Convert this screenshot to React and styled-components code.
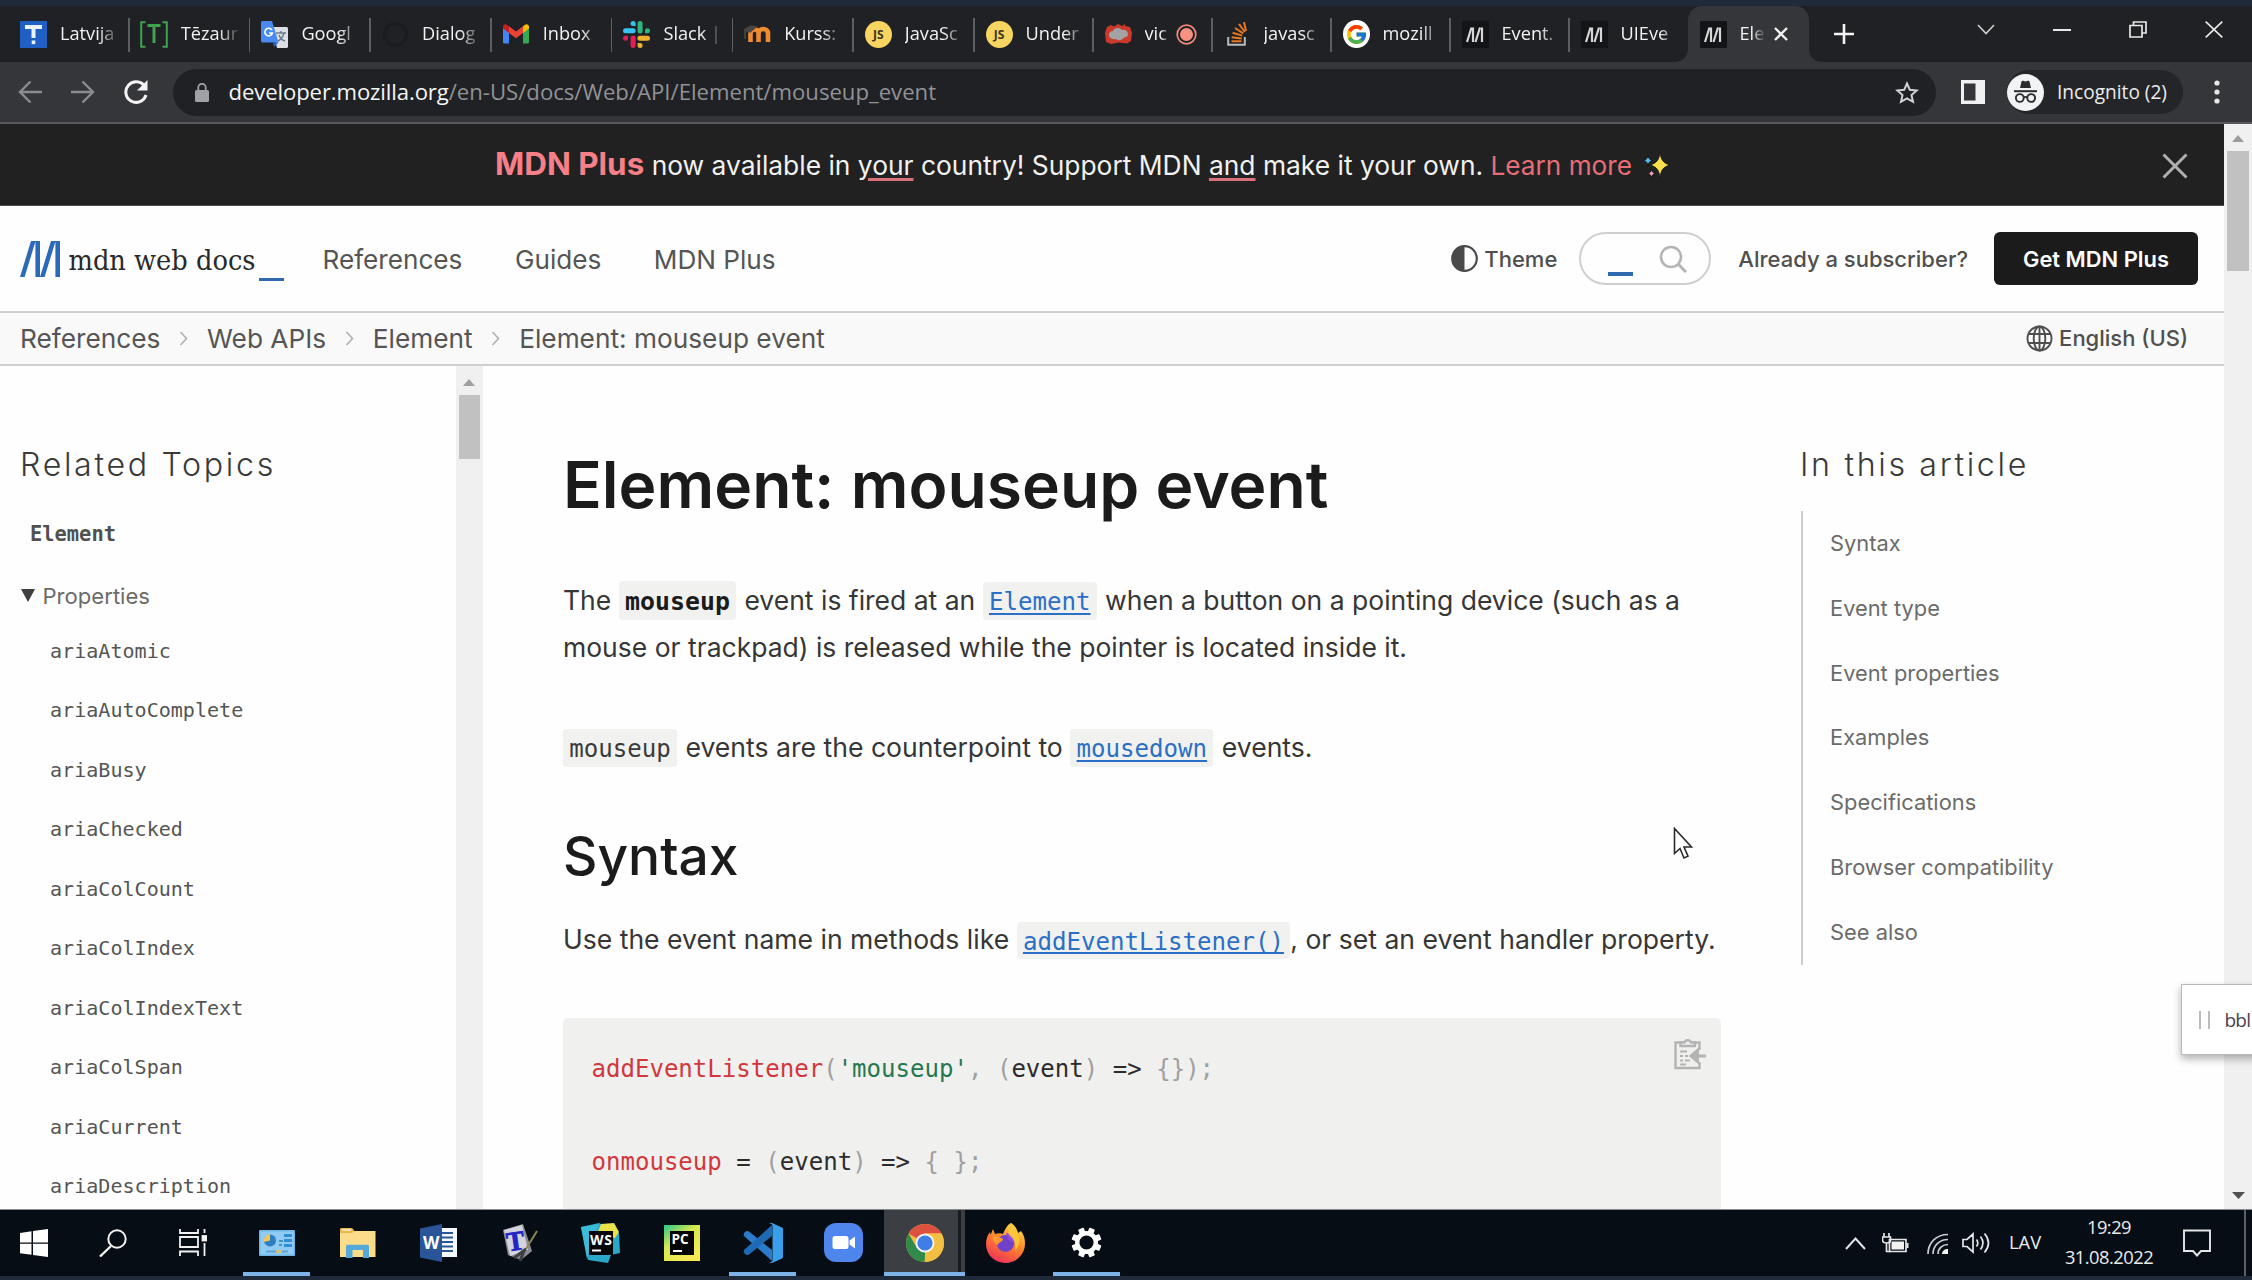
import React from "react";
import styled, { createGlobalStyle, css } from "styled-components";
import { FcGoogle } from "react-icons/fc";

const ui = `"Open Sans", "Noto Sans", sans-serif`;
const inter = `Inter, "Liberation Sans", sans-serif`;
const mono = `"DejaVu Sans Mono", "Liberation Mono", monospace`;

const Global = createGlobalStyle`
  html, body { margin: 0; padding: 0; background: #1f2b3b; }
  * { box-sizing: border-box; }
  svg { display: block; flex: none; }
`;

const Screen = styled.div`
  position: relative;
  width: 2252px;
  height: 1280px;
  overflow: hidden;
  display: flex;
  flex-direction: column;
  padding: 6px 0 4px;
  background: #1f2b3b;
  font-family: ${inter};
`;

/* ---------- tab strip ---------- */
const TabStrip = styled.div`
  height: 56px;
  flex: none;
  display: flex;
  padding-left: 8px;
  background: #202124;
  font-family: ${ui};
`;

const TabBox = styled.div`
  position: relative;
  width: ${(p) => p.$w}px;
  flex: none;
  display: flex;
  align-items: center;
  padding-left: 12px;
  gap: 13px;
  ${(p) =>
    p.$active
      ? css`
          background: #35363a;
          border-radius: 14px 14px 0 0;
          &::before,
          &::after {
            content: "";
            position: absolute;
            bottom: 0;
            width: 12px;
            height: 12px;
          }
          &::before {
            left: -12px;
            background: radial-gradient(circle at 0 0, transparent 11.5px, #35363a 12px);
          }
          &::after {
            right: -12px;
            background: radial-gradient(circle at 100% 0, transparent 11.5px, #35363a 12px);
          }
        `
      : css`
          &::after {
            content: "";
            position: absolute;
            right: -1px;
            top: 12px;
            width: ${p.$noSep ? 0 : 1.6}px;
            height: 34px;
            background: #5d5e62;
          }
        `}
`;

const Favicon = styled.div`
  width: 27px;
  height: 27px;
  flex: none;
  display: flex;
  align-items: center;
  justify-content: center;
`;

const TabTitle = styled.div`
  width: ${(p) => p.$w || 62}px;
  overflow: hidden;
  white-space: nowrap;
  font-size: 18.2px;
  line-height: 28px;
  color: #f1f2f2;
  margin-top: -2px;
  mask-image: linear-gradient(to right, #000 ${(p) => p.$solid ?? 62}%, rgba(0, 0, 0, 0.15) 92%);
`;

const WindowButtons = styled.div`
  flex: 1;
  display: flex;
  align-items: center;
  color: #e8e8e8;
`;

const Slot = styled.div`
  display: flex;
  margin-left: ${(p) => p.$ml || 0}px;
  margin-top: ${(p) => p.$mt || 0}px;
`;

const YellowDisc = styled.div`
  width: 27px;
  height: 27px;
  border-radius: 50%;
  background: #f7d560;
  color: #3b3420;
  font: 700 12px/27px ${ui};
  text-align: center;
`;

const WhiteDisc = styled.div`
  width: 28px;
  height: 28px;
  border-radius: 50%;
  background: #fff;
  display: flex;
  align-items: center;
  justify-content: center;
`;

const MIcon = () => (
  <svg width="27" height="27" viewBox="0 0 27 27">
    <rect width="27" height="27" fill="#131417" />
    <path d="M5 21 9.5 6.500M11 6.500V21M13.500 21 18 6.500M20 6.500V21" stroke="#d6d6d6" strokeWidth="2.200" fill="none" />
  </svg>
);

const favicons = {
  latvija: (
    <svg width="27" height="27" viewBox="0 0 27 27">
      <rect width="27" height="27" fill="#2060c4" />
      <path d="M5 4h17v4h-6.500v9h-4V8H5z" fill="#eaf3ff" />
      <rect x="11.700" y="19.500" width="3.600" height="3.600" fill="#eaf3ff" />
    </svg>
  ),
  tezaurs: (
    <svg width="28" height="27" viewBox="0 0 28 27" fill="none" stroke="#3fa34d">
      <path d="M5.500 1.200H1.200v24.600h4.300M22.500 1.200h4.300v24.600h-4.300" strokeWidth="2" />
      <path d="M7.500 4.500h13M14 4.500V22" strokeWidth="3" />
    </svg>
  ),
  translate: (
    <svg width="27" height="27" viewBox="0 0 27 27">
      <path d="M11 6h14.500c.8 0 1.500.7 1.500 1.500v18c0 .8-.7 1.500-1.500 1.500H16z" fill="#dcdfe3" />
      <path d="M15 12h10M20 10v2M23 12c-1 4-4 7-6 8M18 14c1 3 3 5 6 6" stroke="#6d7c8c" strokeWidth="1.400" fill="none" />
      <path d="M1.500 0H11l6.500 21.500H1.500C.7 21.500 0 20.800 0 20V1.500C0 .7.7 0 1.500 0z" fill="#4a89f0" />
      <path d="m13 26 4.500-4.500H12z" fill="#2f62c9" />
      <path d="M11 9.200A3.800 3.800 0 1 0 11.400 12H8" stroke="#fff" strokeWidth="1.600" fill="none" />
    </svg>
  ),
  dialog: (
    <svg width="27" height="27" viewBox="0 0 27 27">
      <circle cx="13.500" cy="13.500" r="11" fill="none" stroke="#1b1c1f" strokeWidth="3" />
    </svg>
  ),
  gmail: (
    <svg width="26" height="20" viewBox="0 0 26 20">
      <path d="M0 3v15c0 1 .6 1.500 1.500 1.500H6V8z" fill="#4285f4" />
      <path d="M26 3v15c0 1-.6 1.500-1.500 1.500H20V8z" fill="#34a853" />
      <path d="M20 2.500V9l6-4.500V2.800C26 .4 23.500-.6 21.800.8z" fill="#fbbc04" />
      <path d="M6 9V2.300l7 5.300 7-5.300V9l-7 5.200z" fill="#ea4335" />
      <path d="M0 2.800v1.700L6 9V2.500L4.200.8C2.500-.6 0 .4 0 2.800z" fill="#c5221f" />
    </svg>
  ),
  slack: (
    <svg width="27" height="27" viewBox="0 0 27 27">
      <g fill="#36c5f0"><rect x="0" y="7.200" width="12.600" height="5" rx="2.500" /><path d="M7.600 2.500a2.500 2.500 0 0 1 5 0V5h-2.500a2.500 2.500 0 0 1-2.500-2.500z" /></g>
      <g fill="#2eb67d"><rect x="14.600" y="0" width="5" height="12.600" rx="2.500" /><path d="M24.500 7.200a2.500 2.500 0 0 1 0 5H22V9.700a2.500 2.500 0 0 1 2.500-2.500z" /></g>
      <g fill="#ecb22e"><rect x="14.400" y="14.800" width="12.600" height="5" rx="2.500" /><path d="M14.600 22h2.500a2.500 2.500 0 1 1-2.500 2.500z" /></g>
      <g fill="#e01e5a"><rect x="7.600" y="14.400" width="5" height="12.600" rx="2.500" /><path d="M5 14.800v2.500a2.500 2.500 0 1 1-2.500-2.500z" /></g>
    </svg>
  ),
  moodle: (
    <svg width="27" height="18" viewBox="0 0 27 18" fill="none">
      <path d="M6.500 17V8.500c0-5.500 8-5.500 8 0V17M14.500 8.500c0-6 9.500-6 9.500 0V17" stroke="#ee8a30" strokeWidth="4.600" />
      <path d="M0 5 7 1l5 1-6 5zM1 5v9" stroke="#4a4542" strokeWidth="1.500" fill="#4a4542" />
    </svg>
  ),
  js: <YellowDisc>JS</YellowDisc>,
  vic: (
    <svg width="27" height="20" viewBox="0 0 27 20">
      <path d="M2 3 6 1l3 1.500L13 0l4 2 3-2v2l5 1 2 6-1 8-4 2.500-8-1-8 1.500-5-2L0 9z" fill="#c93a2c" />
      <path d="M4 11c0-3 2-4 4-4 1-3 6-4.500 9-1 3-1 6 1 6 4.500 0 2-2 3-4 3-2 3-6 3.500-8 1.500-3 1-7-1-7-4z" fill="#a3a3a3" />
    </svg>
  ),
  stack: (
    <svg width="20" height="24" viewBox="0 0 20 24" fill="none">
      <path d="M1.200 15v7.800h16.600V15" stroke="#b9babb" strokeWidth="2" />
      <path d="M4.500 19.300h10M4.700 15.200l10 1.200M5.600 10.800l9.600 2.800M8 6l8.200 5.400M12 2l5.800 8M17 0l2 9" stroke="#e87922" strokeWidth="2" />
    </svg>
  ),
  google: (
    <WhiteDisc>
      <FcGoogle size={23} />
    </WhiteDisc>
  ),
  mdn: <MIcon />,
};

const tabs = [
  ["latvija", "Latvija", 120.7],
  ["tezaurs", "Tēzaur", 120.7],
  ["translate", "Googl", 120.7],
  ["dialog", "Dialog", 120.7],
  ["gmail", "Inbox", 120.7],
  ["slack", "Slack |", 120.7],
  ["moodle", "Kurss:", 120.7],
  ["js", "JavaSc", 120.7],
  ["js", "Under", 119],
  ["vic", "vic", 119],
  ["stack", "javasc", 119],
  ["google", "mozill", 119],
  ["mdn", "Event.", 119],
  ["mdn", "UIEve", 119],
];

const Recording = () => (
  <svg width="21" height="21" viewBox="0 0 21 21">
    <circle cx="10.500" cy="10.500" r="9.300" fill="none" stroke="#f08a7a" strokeWidth="1.700" />
    <circle cx="10.500" cy="10.500" r="6.500" fill="#f79182" />
  </svg>
);

/* ---------- toolbar ---------- */
const Toolbar = styled.div`
  height: 62px;
  flex: none;
  display: flex;
  align-items: center;
  background: #35363a;
  border-bottom: 2px solid #57595c;
  padding-left: 18px;
  font-family: ${ui};
`;

const AddressBar = styled.div`
  width: 1763px;
  height: 47px;
  margin-left: 25px;
  border-radius: 24px;
  background: #202124;
  display: flex;
  align-items: center;
  padding: 0 17px 0 22px;
  font-size: 22.150px;
  color: #909296;
`;

const Url = styled.div`
  flex: 1;
  margin: -2px 0 0 19.500px;
  white-space: nowrap;
  b {
    font-weight: 400;
    color: #f4f5f5;
    letter-spacing: -0.12px;
  }
`;

const IncognitoChip = styled.div`
  display: flex;
  align-items: center;
  width: 176px;
  height: 44px;
  margin-left: 22px;
  border-radius: 22px;
  background: #242528;
  gap: 13px;
  font-size: 19.100px;
  color: #eceded;
  white-space: nowrap;
`;

/* ---------- page ---------- */
const Viewport = styled.div`
  height: 1085px;
  flex: none;
  display: flex;
  background: #fefefe;
  overflow: hidden;
`;

const Page = styled.div`
  width: 2224px;
  flex: none;
  display: flex;
  flex-direction: column;
`;

const Scrollbar = styled.div`
  width: ${(p) => p.$w}px;
  flex: none;
  display: flex;
  flex-direction: column;
  align-items: center;
  background: #f0f0f0;
`;

const Thumb = styled.div`
  width: 21.500px;
  height: ${(p) => p.$h}px;
  background: #c1c1c1;
`;

const ArrowCell = styled.div`
  height: ${(p) => p.$h}px;
  padding-top: ${(p) => p.$pt}px;
`;

const Banner = styled.div`
  height: 82px;
  flex: none;
  display: flex;
  align-items: center;
  justify-content: space-between;
  padding: 0 36px 0 495px;
  background: #212121;
  color: #f1f1f1;
  font-size: 26.380px;
  line-height: 40px;
  border-bottom: 1px solid #4a4a4a;
`;

const BannerText = styled.div`
  display: flex;
  align-items: center;
  white-space: pre;
`;

const Accent = styled.span`
  color: ${(p) => (p.$strong ? "#f77f88" : "#e76e77")};
  font-weight: ${(p) => (p.$strong ? 700 : 400)};
  font-size: ${(p) => (p.$strong ? 31.4 : 26.2)}px;
`;

const Underlined = styled.span`
  text-decoration: underline;
  text-decoration-color: #d8707c;
  text-decoration-thickness: 3px;
  text-underline-offset: 3px;
`;

const Header = styled.div`
  height: 107px;
  flex: none;
  display: flex;
  align-items: center;
  padding: 0 26px 0 20px;
  background: #fefefe;
  border-bottom: 2px solid #cdcdcd;
`;

const LogoText = styled.div`
  margin: 2px 0 0 8.500px;
  font-family: "DejaVu Serif Condensed", "DejaVu Serif", serif;
  font-stretch: semi-condensed;
  font-size: 28.600px;
  color: #2a2a2a;
  white-space: nowrap;
`;

const Caret = styled.div`
  width: 25.500px;
  height: 3.500px;
  background: #3068ad;
  margin: ${(p) => p.$m};
`;

const Nav = styled.nav`
  display: flex;
  gap: 52.500px;
  margin: 2px 0 0 38.500px;
  font-size: 26.150px;
  color: #555;
  flex: 1;
`;

const HeaderItem = styled.div`
  display: flex;
  align-items: center;
  gap: 6px;
  margin-left: ${(p) => p.$ml || 0}px;
  font-size: 22px;
  font-weight: 500;
  color: #4f4f4f;
  white-space: nowrap;
`;

const SearchPill = styled.div`
  display: flex;
  width: 132px;
  height: 53px;
  margin-left: 22px;
  border: 2px solid #cfcfcf;
  border-radius: 27px;
  padding-left: 26.500px;
`;

const PlusButton = styled.div`
  width: 204px;
  height: 53px;
  margin-left: 26px;
  border-radius: 6px;
  background: #1b1b1b;
  color: #fff;
  font-size: 21.900px;
  font-weight: 600;
  line-height: 54px;
  text-align: center;
`;

const Crumbs = styled.div`
  height: 53px;
  flex: none;
  display: flex;
  align-items: center;
  padding: 0 36px 1px 20px;
  background: #f9f9f9;
  border-bottom: 2px solid #cfcfcf;
  color: #555;
  font-size: 26.250px;
  white-space: nowrap;
  svg.sep {
    margin: 0 18.800px 0;
  }
`;

const Spacer = styled.div`
  flex: 1;
`;

const Columns = styled.div`
  flex: 1;
  min-height: 0;
  display: flex;
`;

const Sidebar = styled.aside`
  width: 455.500px;
  flex: none;
  padding-top: 69px;
`;

const SideTitle = styled.div`
  height: 60px;
  line-height: 60px;
  font-size: 32.200px;
  font-weight: 350;
  letter-spacing: 2.650px;
  color: #3a3a3a;
  white-space: nowrap;
  padding-left: ${(p) => p.$pl || 0}px;
`;

const SideHeading = styled.div`
  height: 40px;
  line-height: 40px;
  margin: 18.500px 0 22px;
  padding-left: 30px;
  font: 700 20.400px/40px ${mono};
  color: #505050;
`;

const SideGroup = styled.div`
  display: flex;
  align-items: center;
  height: 40px;
  margin-bottom: 6px;
  padding-left: 21px;
  gap: 7.500px;
  font-size: 22.100px;
  color: #6b6b6b;
`;

const SideLink = styled.div`
  height: 59.500px;
  padding-left: 50px;
  font: 400 20.070px/59.500px ${mono};
  color: #555;
`;

const Article = styled.main`
  width: 1238px;
  flex: none;
  padding: 79.500px 0 0 80px;
  color: #363636;
`;

const H1 = styled.h1`
  margin: 0 0 53px;
  font-size: 64.150px;
  font-weight: 600;
  line-height: 78px;
  color: #1b1b1b;
  white-space: nowrap;
`;

const H2 = styled.h2`
  margin: 52.500px 0 28.500px;
  font-size: 53.300px;
  font-weight: 500;
  line-height: 64px;
  color: #1b1b1b;
`;

const P = styled.p`
  margin: 0 0 ${(p) => p.$mb || 0}px;
  font-size: ${(p) => p.$fs || 26.5}px;
  line-height: 47.400px;
  white-space: nowrap;
`;

const Code = styled.code`
  padding: 5.500px 6.300px 4px;
  margin-right: ${(p) => (p.$tight ? 0 : 0.8)}px;
  border-radius: 4px;
  background: #f1f1f0;
  font-family: ${mono};
  font-size: ${(p) => (p.$bold ? 24.9 : 24.1)}px;
  font-weight: ${(p) => (p.$bold ? 700 : 400)};
  line-height: 30px;
  color: ${(p) => (p.$bold ? "#1b1b1b" : "#3a3a3a")};
`;

const CodeLink = styled.a`
  color: #2b6fc6;
  text-decoration: underline;
  text-decoration-thickness: 2px;
  text-underline-offset: 3px;
`;

const CodeBlock = styled.pre`
  position: relative;
  height: 220px;
  margin: 54px 0 0;
  padding: 28.500px 28.500px;
  border-radius: 5px;
  background: #f0f0ef;
  font: 400 24.060px/46.300px ${mono};
  color: #a0a0a0;
`;

const Tok = styled.span`
  color: ${(p) => ({ fn: "#d2373c", str: "#24784f", id: "#2c2c2c" }[p.$k])};
`;

const CopyIcon = styled.div`
  position: absolute;
  top: 18px;
  right: 15px;
`;

const Toc = styled.aside`
  margin-left: 79px;
  padding-top: 69px;
`;

const TocList = styled.div`
  margin: 16px 0 0 1px;
  border-left: 2px solid #cdcdcd;
  padding-left: 27px;
`;

const TocItem = styled.div`
  height: 64.800px;
  line-height: 64px;
  font-size: 21.850px;
  color: #6b6b6b;
`;

/* ---------- overlays ---------- */
const Popup = styled.div`
  position: absolute;
  left: 2181px;
  top: 984px;
  width: 90px;
  height: 71px;
  display: flex;
  align-items: center;
  padding-left: 17px;
  gap: 14.500px;
  background: #fff;
  border: 1.500px solid #b9b9b9;
  box-shadow: 0 4px 8px rgba(0, 0, 0, 0.3);
  font: 400 19px ${ui};
  letter-spacing: -0.800px;
  color: #4a3f4c;
`;

const Grip = styled.div`
  width: 11px;
  height: 18px;
  border: solid #bcbcbc;
  border-width: 0 2.500px;
`;

const Pointer = styled.div`
  position: absolute;
  left: 1673px;
  top: 827px;
`;

/* ---------- taskbar ---------- */
const Taskbar = styled.div`
  height: 67px;
  flex: none;
  display: flex;
  background: #070d14;
  border-top: 1px solid #878b8f;
  font-family: ${ui};
`;

const TaskCell = styled.div`
  position: relative;
  width: ${(p) => p.$w || 81}px;
  margin-left: ${(p) => p.$ml || 0}px;
  padding-bottom: 1px;
  display: flex;
  align-items: center;
  justify-content: center;
  background: ${(p) => (p.$active ? "linear-gradient(to right, #3b3f43 74px, #191d22 74px, #191d22 77px, #3b3f43 77px)" : "none")};
  &::after {
    content: "";
    position: absolute;
    bottom: 0;
    height: 4px;
    left: ${(p) => (p.$active ? 0 : 7)}px;
    right: ${(p) => (p.$active ? 0 : 7)}px;
    background: ${(p) => (p.$active || p.$open ? "#7db3e8" : "none")};
  }
`;

const Tray = styled.div`
  margin-left: auto;
  display: flex;
  align-items: center;
  color: #e9ebed;
  padding-right: 6px;
`;

const Lang = styled.div`
  width: 34px;
  margin: -3px 0 0 18px;
  font-size: 18.400px;
`;

const Clock = styled.div`
  width: 94px;
  margin: -3px 0 0 19px;
  font-size: 18.300px;
  line-height: 30px;
  letter-spacing: -0.5px;
  text-align: center;
`;

const ShowDesktop = styled.div`
  width: 2px;
  height: 66px;
  margin-left: 33px;
  background: #5b6066;
`;

const WinLogo = () => (
  <svg width="28" height="28" viewBox="0 0 28 28" fill="#fff">
    <path d="M0 4 11.500 2.300V13.400H0zM13 2.100 28 0v13.400H13zM0 14.800h11.500v11L0 24.200zM13 14.800h15V28l-15-2.100z" />
  </svg>
);

const SearchGlyph = () => (
  <svg width="28" height="28" viewBox="0 0 28 28" fill="none" stroke="#f2f2f2" strokeWidth="2">
    <circle cx="18" cy="10" r="8.700" />
    <path d="M12 17 1 27.500" strokeWidth="2.400" />
  </svg>
);

const TaskView = () => (
  <svg width="28" height="27" viewBox="0 0 28 27" fill="none" stroke="#f2f2f2" strokeWidth="1.800">
    <path d="M1 0v4h18V0M1 27v-4.500h18V27M1 8h18v10H1z" />
    <path d="M25.500 0v4M25.500 14v13" />
    <rect x="23.500" y="7" width="4" height="4.500" fill="#f2f2f2" />
  </svg>
);

const PanelIcon = () => (
  <svg width="36" height="26" viewBox="0 0 36 26">
    <rect width="36" height="26" rx="1" fill="#6fb6e8" />
    <rect x="1.500" y="1.500" width="33" height="23" fill="#8fcbf2" />
    <circle cx="11" cy="10.500" r="6" fill="#2f7fc0" />
    <path d="M11 10.500V4a6.500 6.500 0 0 0-6 8z" fill="#f2c65b" />
    <path d="M20 11h4M20 15h3" stroke="#2f7fbb" strokeWidth="1.600" />
    <path d="M25 4h8v3h-8zM25 9h8v3h-8zM25 14h8v3h-8z" fill="#2f8fd0" />
    <path d="M7 21.500h22" stroke="#5ba5d4" strokeWidth="2" />
    <path d="M17 20h6v3h-6z" fill="#d7c078" />
  </svg>
);

const FolderIcon = () => (
  <svg width="37" height="30" viewBox="0 0 37 30">
    <path d="M1 1.500C1 .7 1.500 0 2.500 0H13l2.500 3H36v26H1z" fill="#e9b64b" />
    <path d="M1 5h12l2.500-2H36.500v26H1z" fill="#fbdc8b" />
    <path d="M3 2h9" stroke="#fff3cc" strokeWidth="1.500" />
    <path d="M7 30V18.500c0-1 .8-1.800 1.800-1.800h19.400c1 0 1.800.8 1.800 1.800V30h-6v-8H13.500v8z" fill="#53a9d8" />
  </svg>
);

const WordIcon = () => (
  <svg width="37" height="38" viewBox="0 0 37 38">
    <rect x="19" y="4" width="18" height="29" fill="#f5f8fc" />
    <path d="M22 9h11M22 13.500h11M22 18h11M22 22.500h11M22 27h11" stroke="#2b579a" strokeWidth="2.200" />
    <path d="M0 4.500 22 0v38L0 33.500z" fill="#2a5699" />
    <text x="3" y="25" fontFamily="Open Sans, sans-serif" fontSize="17" fontWeight="700" fill="#fff">W</text>
  </svg>
);

const TIcon = () => (
  <svg width="36" height="38" viewBox="0 0 36 38">
    <path d="M1 6 21 0l9 27-11 9-13-5z" fill="#8d8d94" />
    <path d="M2 6 20 1l6 25-18 6z" fill="#d3d4e0" />
    <text x="4.500" y="26" fontFamily="Liberation Serif, serif" fontSize="27" fontWeight="700" fill="#2424c4" stroke="#2424c4" strokeWidth="0.800" transform="rotate(-8 14 18)">T</text>
    <path d="M35 7 24 25" stroke="#8c8654" strokeWidth="2" />
    <path d="M24 25 12 34M22 27l-4 10" stroke="#3e3e44" strokeWidth="3" />
  </svg>
);

const WsIcon = () => (
  <svg width="40" height="40" viewBox="0 0 40 40">
    <path d="M0 4 18 0l20 10 1 20-9 2-3 8L7 37z" fill="#2aa8c9" />
    <path d="M20 1 33 0l5 9-4 6-18-4z" fill="#e9e34c" />
    <path d="M0 4 18 1 10 20 6 36z" fill="#3dbcd8" />
    <rect x="8" y="8" width="24" height="24" fill="#050708" />
    <text x="9" y="21.500" fontFamily="Open Sans, sans-serif" fontSize="14" fontWeight="700" fill="#fff" textLength="22">WS</text>
    <path d="M11 27.500h9" stroke="#fff" strokeWidth="2" />
  </svg>
);

const PcIcon = () => (
  <svg width="36" height="36" viewBox="0 0 36 36">
    <defs>
      <linearGradient id="pc" x1="0" y1="0" x2="0.700" y2="1">
        <stop offset="0" stopColor="#27c88a" />
        <stop offset="0.450" stopColor="#d8e84f" />
        <stop offset="1" stopColor="#f7ea55" />
      </linearGradient>
    </defs>
    <rect width="36" height="36" fill="url(#pc)" />
    <rect x="6" y="6" width="24" height="24" fill="#050505" />
    <text x="7.500" y="18.500" fontFamily="Open Sans, sans-serif" fontSize="13.500" fontWeight="700" fill="#fff">PC</text>
    <path d="M9 26h9" stroke="#fff" strokeWidth="2" />
  </svg>
);

const VsCode = () => (
  <svg width="41" height="40" viewBox="0 0 41 40">
    <path d="M2.500 13.500 30 38V27L7 8.500C5.500 7.500 4 8 2.800 9.200s-1.600 3-.3 4.300z" fill="#2a7ccb" />
    <path d="M2.500 26.500 30 2v11L7 31.500c-1.500 1-3 .5-4.200-.7s-1.600-3-.3-4.300z" fill="#1f6ab4" />
    <path d="M30 0l9.500 4.300c.8.400 1.500 1 1.500 2v27.400c0 1-.7 1.600-1.500 2L30 40c-1 .3-2 0-2.500-1 1.500.5 3-.5 3-2V3c0-1.500-1.500-2.500-3-2 .5-1 1.500-1.300 2.500-1z" fill="#3a9fea" />
  </svg>
);

const ZoomIcon = () => (
  <svg width="39" height="39" viewBox="0 0 39 39">
    <rect width="39" height="39" rx="12" fill="#4f86ee" />
    <rect x="8.500" y="13" width="16" height="13" rx="2.500" fill="#fff" />
    <path d="m25.500 17.500 5.500-4v12l-5.500-4z" fill="#fff" />
  </svg>
);

const ChromeIcon = () => (
  <svg width="38" height="38" viewBox="0 0 38 38">
    <circle cx="19" cy="19" r="19" fill="#f2bf42" />
    <path d="M19 19 2.550 9.500A19 19 0 0 1 35.450 9.500H19z" fill="#dc5040" />
    <path d="M2.550 9.500 10.800 23.700 19 28.500 L18.500 38A19 19 0 0 1 2.550 9.500z" fill="#2f8a4b" />
    <path d="M10.800 23.700 19 28.500 18 38z" fill="#2f8a4b" />
    <path d="M27.300 23.700 19 38a19 19 0 0 0 16.450-28.500H19z" fill="#f2bf42" />
    <circle cx="19" cy="19" r="9.500" fill="#f4f4f4" />
    <circle cx="19" cy="19" r="7.600" fill="#3f7ee8" />
  </svg>
);

const FirefoxIcon = () => (
  <svg width="39" height="40" viewBox="0 0 39 40">
    <defs>
      <linearGradient id="ff" x1="0.800" y1="0" x2="0.300" y2="1">
        <stop offset="0" stopColor="#ffe14d" />
        <stop offset="0.450" stopColor="#ff8a2a" />
        <stop offset="1" stopColor="#f0305a" />
      </linearGradient>
    </defs>
    <path d="M25 0c5 3 6 7 7 10l3-2c3 4 4 8 4 12.500C39 31 30.500 40 19.500 40S0 31.500 0 21c0-5 1.500-9 4-12l.5 3L7 6l2 5c3-1 6-1 8 0 2-5 4-9 8-11z" fill="url(#ff)" />
    <circle cx="19.500" cy="20.500" r="8.500" fill="#7141c8" />
    <path d="M6 13c5 1 8 1 11 3 0 3-5 3-5 6-2-1-5-4-6-9z" fill="#ff9a2e" />
    <path d="M20 10c6 0 10 5 8.500 12-1-3-3-4-6-5z" fill="#8e4be0" />
    <path d="M25 0c5 4 7 9 8 14 1 7-1 11-4 14 1-7-1-12-5-15-3-3-2-9 1-13z" fill="#ffc93c" opacity="0.850" />
  </svg>
);

const GearIcon = () => (
  <svg width="31" height="31" viewBox="-15.500 -15.500 31 31">
    {[0, 45, 90, 135, 180, 225, 270, 315].map((a) => (
      <rect key={a} x="-3" y="-15" width="6" height="7" rx="0.800" fill="#fff" transform={`rotate(${a + 22.5})`} />
    ))}
    <circle r="9.300" fill="none" stroke="#fff" strokeWidth="4.400" />
  </svg>
);

const apps = [
  [PanelIcon, "open"],
  [FolderIcon],
  [WordIcon],
  [TIcon],
  [WsIcon],
  [PcIcon],
  [VsCode, "open"],
  [ZoomIcon],
  [ChromeIcon, "active"],
  [FirefoxIcon],
  [GearIcon, "open"],
];

const Tri = ({ down, color, w = 13, h = 8 }) => (
  <svg width={w} height={h} viewBox="0 0 13 8" preserveAspectRatio="none">
    <path d={down ? "M0 0h13L6.500 8z" : "M0 8h13L6.500 0z"} fill={color} />
  </svg>
);

const Chevron = () => (
  <svg className="sep" width="9" height="15" viewBox="0 0 9 15" fill="none" stroke="#b0b0b0" strokeWidth="1.600">
    <path d="m1.500 1 6 6.500-6 6.500" />
  </svg>
);

const MdnMark = () => (
  <svg width="40" height="36" viewBox="0 0 40 36" fill="#2a6ab8">
    <path d="M11 0h4.600L4.600 36H0zM15.400 0H20v36h-4.600zM31 0h4.600L24.600 36H20zM35.400 0H40v36h-4.600z" />
  </svg>
);

const props = [
  "ariaAtomic", "ariaAutoComplete", "ariaBusy", "ariaChecked", "ariaColCount",
  "ariaColIndex", "ariaColIndexText", "ariaColSpan", "ariaCurrent", "ariaDescription",
];

const toc = ["Syntax", "Event type", "Event properties", "Examples", "Specifications", "Browser compatibility", "See also"];

const crumbs = ["References", "Web APIs", "Element", "Element: mouseup event"];

export default function App() {
  return (
    <Screen>
      <Global />
      <TabStrip>
        {tabs.map(([icon, title, w], i) => (
          <TabBox key={i} $w={w} $noSep={i === tabs.length - 1}>
            <Favicon>{favicons[icon]}</Favicon>
            <TabTitle $w={icon === "vic" ? 26 : 62}>{title}</TabTitle>
            {icon === "vic" && (
              <Slot $ml={-8}>
                <Recording />
              </Slot>
            )}
          </TabBox>
        ))}
        <TabBox $w={121} $active>
          <Favicon><MIcon /></Favicon>
          <TabTitle $w={26} $solid={45}>Ele</TabTitle>
          <Slot $ml={-5}>
            <svg width="14" height="14" viewBox="0 0 14 14" stroke="#f2f2f2" strokeWidth="2.400">
              <path d="m1 1 12 12M13 1 1 13" />
            </svg>
          </Slot>
        </TabBox>
        <WindowButtons>
          <Slot $ml={25}>
            <svg width="20" height="20" viewBox="0 0 20 20" stroke="#f4f4f4" strokeWidth="2.600"><path d="M10 0v20M0 10h20" /></svg>
          </Slot>
          <Slot $ml={123} $mt={-9}>
            <svg width="18" height="11" viewBox="0 0 18 11" fill="none" stroke="#d0d0d0" strokeWidth="1.600"><path d="m1 1 8 8.500L17 1" /></svg>
          </Slot>
          <Slot $ml={58} $mt={-8}>
            <svg width="18" height="2" viewBox="0 0 18 2"><rect width="18" height="2" fill="#e8e8e8" /></svg>
          </Slot>
          <Slot $ml={58} $mt={-9}>
            <svg width="18" height="17" viewBox="0 0 18 17" fill="none" stroke="#e8e8e8" strokeWidth="1.700"><path d="M1 4.500h12V16H1zM4.500 4.500V1H17v11h-4" /></svg>
          </Slot>
          <Slot $ml={58} $mt={-9}>
            <svg width="18" height="17" viewBox="0 0 18 17" stroke="#e8e8e8" strokeWidth="1.700"><path d="m.7.700 16.600 15.600M17.300.700.700 16.300" /></svg>
          </Slot>
        </WindowButtons>
      </TabStrip>

      <Toolbar>
        <svg width="24" height="24" viewBox="0 0 24 24" fill="none" stroke="#8a8c8f" strokeWidth="2.400"><path d="M24 12H2M12.500 1.500 2 12l10.500 10.500" /></svg>
        <Slot $ml={29}>
          <svg width="24" height="24" viewBox="0 0 24 24" fill="none" stroke="#8a8c8f" strokeWidth="2.400"><path d="M0 12h22M11.500 1.500 22 12 11.500 22.500" /></svg>
        </Slot>
        <Slot $ml={29}>
          <svg width="24" height="24" viewBox="0 0 24 24" fill="none" stroke="#f4f4f4" strokeWidth="3">
            <path d="M20.500 6A10.300 10.300 0 1 0 22 15" />
            <path d="M23.500 0v10.500H13z" fill="#f4f4f4" stroke="none" />
          </svg>
        </Slot>
        <AddressBar>
          <svg width="14" height="19" viewBox="0 0 14 19">
            <rect y="7" width="14" height="12" rx="1.500" fill="#9fa1a5" />
            <path d="M3.300 8V4.500a3.700 3.700 0 0 1 7.400 0V8" fill="none" stroke="#9fa1a5" strokeWidth="1.800" />
          </svg>
          <Url><b>developer.mozilla.org</b>/en-US/docs/Web/API/Element/mouseup_event</Url>
          <svg width="24" height="23" viewBox="0 0 24 23" fill="none" stroke="#d0d2d4" strokeWidth="2">
            <path d="m12 2.500 2.800 6.300 6.900.7-5.200 4.600 1.500 6.700-6-3.500-6 3.500 1.500-6.700L2.300 9.500l6.900-.7z" />
          </svg>
        </AddressBar>
        <Slot $ml={25}>
          <svg width="24" height="24" viewBox="0 0 24 24"><path fillRule="evenodd" d="M0 0h24v24H0zM3 3.500v17h11.500v-17z" fill="#f1f1f1" /></svg>
        </Slot>
        <IncognitoChip>
          <svg width="37" height="37" viewBox="0 0 37 37">
            <circle cx="18.500" cy="18.500" r="18.500" fill="#f1f3f4" />
            <path d="M13 14 14.500 7.500c.2-.8 1-1 1.700-.7l2.300.8 2.300-.8c.7-.3 1.500-.1 1.700.7L24 14z" fill="#2b2d31" />
            <path d="M7 17.200h23" stroke="#2b2d31" strokeWidth="2" />
            <g fill="none" stroke="#2b2d31" strokeWidth="1.900"><circle cx="12.800" cy="24" r="3.900" /><circle cx="24.200" cy="24" r="3.900" /><path d="M16.700 23.500c1.200-.8 2.400-.8 3.600 0" /></g>
          </svg>
          Incognito (2)
        </IncognitoChip>
        <Slot $ml={31}>
          <svg width="6" height="24" viewBox="0 0 6 24" fill="#e8e8e8"><circle cx="3" cy="3" r="2.600" /><circle cx="3" cy="12" r="2.600" /><circle cx="3" cy="21" r="2.600" /></svg>
        </Slot>
      </Toolbar>

      <Viewport>
        <Page>
          <Banner>
            <BannerText>
              <span>
                <Accent $strong>MDN Plus</Accent> now available in <Underlined>your</Underlined> country! Support MDN <Underlined>and</Underlined> make it your own. <Accent>Learn more</Accent>
              </span>
              <Slot $ml={11}>
                <svg width="28" height="28" viewBox="0 0 28 28" stroke="#0c0c0c" strokeWidth="0.800">
                  <path d="M17 1c1 8 3 11 10 13-7 2-9 5-10 13-1-8-3-11-10-13 7-2 9-5 10-13z" fill="#f7e04b" />
                  <path d="M5 4c.5 3.500 1.500 4.500 4.500 5.500-3 1-4 2-4.500 5.500-.5-3.500-1.500-4.500-4.500-5.500C3.500 8.500 4.500 7.500 5 4z" fill="#58b8e8" />
                  <path d="M8.500 18c.5 3 1.300 3.800 4 4.500-2.700.7-3.500 1.500-4 4.500-.5-3-1.300-3.800-4-4.500 2.700-.7 3.500-1.500 4-4.500z" fill="#f2a3b3" />
                </svg>
              </Slot>
            </BannerText>
            <Slot $mt={3}>
              <svg width="26" height="26" viewBox="0 0 26 26" stroke="#b0b0b0" strokeWidth="3"><path d="m1.500 1.500 23 23M24.500 1.500l-23 23" /></svg>
            </Slot>
          </Banner>

          <Header>
            <MdnMark />
            <LogoText>mdn web docs</LogoText>
            <Caret $m="42px 0 0 3px" />
            <Nav>
              <span>References</span>
              <span>Guides</span>
              <span>MDN Plus</span>
            </Nav>
            <HeaderItem>
              <svg width="27" height="27" viewBox="0 0 27 27"><circle cx="13.500" cy="13.500" r="12.300" fill="#fefefe" stroke="#4a4a4a" strokeWidth="2.200" /><path d="M13.500 1.200a12.300 12.300 0 0 0 0 24.600z" fill="#4a4a4a" /></svg>
              Theme
            </HeaderItem>
            <SearchPill>
              <Caret $m="38px 0 0" />
              <Slot $ml={25.5} $mt={11}>
                <svg width="28" height="28" viewBox="0 0 28 28" fill="none" stroke="#b4b4b4" strokeWidth="2.600"><circle cx="12" cy="12" r="10" /><path d="m19 19 8 8" strokeWidth="3" /></svg>
              </Slot>
            </SearchPill>
            <HeaderItem $ml={27}>Already a subscriber?</HeaderItem>
            <PlusButton>Get MDN Plus</PlusButton>
          </Header>

          <Crumbs>
            {crumbs.map((c, i) => (
              <React.Fragment key={c}>
                {i > 0 && <Chevron />}
                <span>{c}</span>
              </React.Fragment>
            ))}
            <Spacer />
            <HeaderItem>
              <svg width="27" height="27" viewBox="0 0 27 27" fill="none" stroke="#4f4f4f" strokeWidth="1.900">
                <circle cx="13.500" cy="13.500" r="12" />
                <ellipse cx="13.500" cy="13.500" rx="5.800" ry="12" />
                <path d="M13.500 1.500v24M2.500 9h22M2.500 18h22" />
              </svg>
              English (US)
            </HeaderItem>
          </Crumbs>

          <Columns>
            <Sidebar>
              <SideTitle $pl={20}>Related Topics</SideTitle>
              <SideHeading>Element</SideHeading>
              <SideGroup>
                <Tri down color="#404040" w={14} h={13} />
                Properties
              </SideGroup>
              {props.map((p) => (
                <SideLink key={p}>{p}</SideLink>
              ))}
            </Sidebar>
            <Scrollbar $w={27.5}>
              <ArrowCell $h={28.5} $pt={12.5}><Tri color="#a0a0a0" w={12} h={7} /></ArrowCell>
              <Thumb $h={64.5} />
            </Scrollbar>
            <Article>
              <H1>Element: mouseup event</H1>
              <P $mb={52.5}>
                The <Code $bold>mouseup</Code> event is fired at an <Code><CodeLink>Element</CodeLink></Code> when a button on a pointing device (such as a
                <br />
                mouse or trackpad) is released while the pointer is located inside it.
              </P>
              <P $fs={26.6}>
                <Code>mouseup</Code> events are the counterpoint to <Code><CodeLink>mousedown</CodeLink></Code> events.
              </P>
              <H2>Syntax</H2>
              <P $fs={26.55}>
                Use the event name in methods like <Code $tight><CodeLink>addEventListener()</CodeLink></Code>, or set an event handler property.
              </P>
              <CodeBlock>
                <Tok $k="fn">addEventListener</Tok>(<Tok $k="str">'mouseup'</Tok>, (<Tok $k="id">event</Tok>) <Tok $k="id">=&gt;</Tok> {"{});\n\n"}
                <Tok $k="fn">onmouseup</Tok> <Tok $k="id">=</Tok> (<Tok $k="id">event</Tok>) <Tok $k="id">=&gt;</Tok> {"{ };"}
                <CopyIcon>
                  <svg width="32" height="34" viewBox="0 0 32 34" fill="none" stroke="#b4b4b4" strokeWidth="2.400">
                    <path d="M25.500 14V6.500H1.500v25.500h24v-6" />
                    <path d="M6.500 10V6.500h4a3.500 3.500 0 0 1 6.500 0h4V10z" fill="#f0f0ef" />
                    <path d="M6 15.500h7M6 20h3M11 20h3M6 24.500h3M11 24.500h5M6 28.500h6" strokeWidth="1.800" />
                    <path d="M32 20H19M23.500 14.500 17 20l6.500 5.500z" strokeWidth="3" fill="#b4b4b4" />
                  </svg>
                </CopyIcon>
              </CodeBlock>
            </Article>
            <Toc>
              <SideTitle>In this article</SideTitle>
              <TocList>
                {toc.map((t) => (
                  <TocItem key={t}>{t}</TocItem>
                ))}
              </TocList>
            </Toc>
          </Columns>
        </Page>
        <Scrollbar $w={28}>
          <ArrowCell $h={27} $pt={11}><Tri color="#9c9c9c" w={12} h={7} /></ArrowCell>
          <Thumb $h={120} />
          <Spacer />
          <ArrowCell $h={18} $pt={1}><Tri down color="#505050" w={13} h={7} /></ArrowCell>
        </Scrollbar>
      </Viewport>

      <Taskbar>
        <TaskCell $w={68}><WinLogo /></TaskCell>
        <TaskCell $w={81} $ml={4}><SearchGlyph /></TaskCell>
        <TaskCell $w={79}><TaskView /></TaskCell>
        <TaskCell $w={4} />
        {apps.map(([Icon, state], i) => (
          <TaskCell key={i} $open={state === "open"} $active={state === "active"}>
            <Icon />
          </TaskCell>
        ))}
        <Tray>
          <svg width="21" height="13" viewBox="0 0 21 13" fill="none" stroke="#e4e6e8" strokeWidth="1.900"><path d="m1 12 9.500-10.500L20 12" /></svg>
          <Slot $ml={16}>
            <svg width="27" height="20" viewBox="0 0 27 20">
              <path d="M7.500 6.500h16.500v12H7.500z" fill="none" stroke="#e4e6e8" strokeWidth="1.700" />
              <rect x="9.500" y="8.500" width="12.500" height="8" fill="#f2f2f2" />
              <path d="M24.500 10h2v5h-2z" fill="#e4e6e8" />
              <path d="M2 0v4M7 0v4M.5 4h8v3c0 2-1.500 3-4 3s-4-1-4-3zM4.500 10v8.500h4" fill="none" stroke="#e4e6e8" strokeWidth="1.700" />
            </svg>
          </Slot>
          <Slot $ml={18} $mt={2}>
            <svg width="22" height="22" viewBox="0 0 22 22" fill="none" stroke="#c9ccd0" strokeWidth="1.700">
              <path d="M1 21C1 9.500 9.500 1.500 21 1.500M6 21C6 12.500 12.500 6.500 21 6.500M11 21c0-5.500 4.500-9.500 10-9.500" />
              <path d="M15 21c0-3 2.500-5 6-5v5z" fill="#f2f2f2" stroke="none" />
            </svg>
          </Slot>
          <Slot $ml={13}>
            <svg width="29" height="24" viewBox="0 0 29 24" fill="none" stroke="#e4e6e8" strokeWidth="1.700">
              <path d="M1 8.500h4l6-5.500v18l-6-5.500H1zM14.500 8.500c1.500 2 1.500 5 0 7M18.500 5.500c3 4 3 9 0 13M22.500 2.500c5 6 5 13 0 19" />
            </svg>
          </Slot>
          <Lang>LAV</Lang>
          <Clock>
            19:29
            <br />
            31.08.2022
          </Clock>
          <Slot $ml={27}>
            <svg width="28" height="28" viewBox="0 0 28 28" fill="none" stroke="#e4e6e8" strokeWidth="1.900"><path d="M1 1.500h26V22H18l-4 4.500L10 22H1z" /></svg>
          </Slot>
          <ShowDesktop />
        </Tray>
      </Taskbar>

      <Popup>
        <Grip />
        bbl
      </Popup>
      <Pointer>
        <svg width="22" height="34" viewBox="0 0 22 34">
          <path d="M1.500 1.500v25l5.500-5 4 9.500 4-1.800-4-9.200h7.500z" fill="#fff" stroke="#2a2a2a" strokeWidth="1.600" />
        </svg>
      </Pointer>
    </Screen>
  );
}
